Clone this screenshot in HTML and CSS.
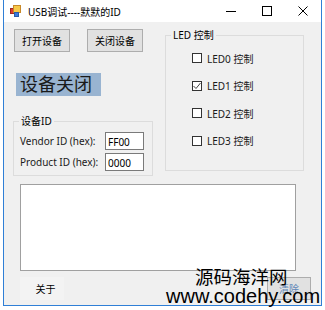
FILE: index.html
```html
<!DOCTYPE html>
<html>
<head>
<meta charset="utf-8">
<link rel="stylesheet" href="styles.css">
</head>
<body>
<div class="window">
  <div class="titlebar">
    <svg class="app-icon" width="11" height="12" viewBox="0 0 11 12">
      <rect x="0.5" y="3.5" width="4" height="5" fill="#e23a2f" stroke="#9c2a22"/>
      <rect x="3.5" y="0.5" width="7" height="7" fill="#f7c948" stroke="#c8892a"/>
      <rect x="4.5" y="7.5" width="4" height="4" fill="#3a7be0" stroke="#2a5ca8"/>
    </svg>
    <span class="title">USB调试----默默的ID</span>
    <div class="caption-btn">
      <svg width="10" height="10" viewBox="0 0 10 10"><line x1="0" y1="5.5" x2="10" y2="5.5" stroke="#000" stroke-width="1"/></svg>
    </div>
    <div class="caption-btn">
      <svg width="10" height="10" viewBox="0 0 10 10"><rect x="0.5" y="0.5" width="9" height="9" fill="none" stroke="#000" stroke-width="1"/></svg>
    </div>
    <div class="caption-btn">
      <svg width="10" height="10" viewBox="0 0 10 10"><path d="M0.5 0.5 L9.5 9.5 M9.5 0.5 L0.5 9.5" stroke="#000" stroke-width="1"/></svg>
    </div>
  </div>
  <div class="client">
    <div class="top-row">
      <div class="left-col">
        <div class="btn-row">
          <button class="btn">打开设备</button>
          <button class="btn">关闭设备</button>
        </div>
        <div class="status">设备关闭</div>
        <fieldset class="group dev-group">
          <legend>设备ID</legend>
          <div class="id-grid">
            <span class="lbl">Vendor ID (hex):</span><span class="tb">FF00</span>
            <span class="lbl">Product ID (hex):</span><span class="tb">0000</span>
          </div>
        </fieldset>
      </div>
      <fieldset class="group led-group">
        <legend>LED 控制</legend>
        <div class="led-list">
          <div class="chk"><span class="box"></span><span>LED0 控制</span></div>
          <div class="chk"><span class="box"><svg width="8" height="8" viewBox="0 0 8 8"><polyline points="0.5,4 3,6.5 7.5,1" fill="none" stroke="#444" stroke-width="1"/></svg></span><span>LED1 控制</span></div>
          <div class="chk"><span class="box"></span><span>LED2 控制</span></div>
          <div class="chk"><span class="box"></span><span>LED3 控制</span></div>
        </div>
      </fieldset>
    </div>
    <div class="log"></div>
    <div class="bottom-row">
      <button class="btn flat">关于</button>
      <button class="btn clear">清除</button>
    </div>
  </div>
</div>
<div class="watermark">
  <div class="wm-cn">源码海洋网</div>
  <div class="wm-en">www.codehy.com</div>
</div>
</body>
</html>
```
FILE: styles.css
```css
* { box-sizing: border-box; }
html, body { margin: 0; padding: 0; }
body {
  background: #ffffff;
  width: 325px;
  height: 310px;
  overflow: hidden;
  position: relative;
  font-family: "Noto Sans", "Noto Sans CJK SC", sans-serif;
  font-size: 10px;
  color: #000;
}
.window {
  margin-left: 3px;
  width: 319px;
  height: 306px;
  border: 1px solid #2f7fd6;
  border-top: none;
  background: #f0f0f0;
  display: flex;
  flex-direction: column;
}
.titlebar {
  height: 22px;
  background: #ffffff;
  display: flex;
  align-items: center;
  padding-left: 6px;
}
.app-icon { flex: none; }
.title {
  margin-left: 7px;
  flex: 1;
  font-size: 10px;
  color: #000;
  white-space: nowrap;
}
.caption-btn {
  width: 36px;
  height: 22px;
  display: flex;
  align-items: center;
  justify-content: center;
}
.client {
  flex: 1;
  padding: 7px 10px 0 9px;
}
.top-row {
  display: flex;
  gap: 12px;
  height: 147px;
}
.left-col {
  width: 140px;
  display: flex;
  flex-direction: column;
}
.btn-row {
  display: flex;
  gap: 17px;
  margin-left: 1px;
}
.btn {
  width: 56px;
  height: 23px;
  background: #e1e1e1;
  border: 1px solid #adadad;
  font-family: "Noto Sans", "Noto Sans CJK SC", sans-serif;
  font-size: 10px;
  color: #000;
  padding: 0;
  margin: 0;
}
.status {
  margin-top: 21px;
  margin-left: 3px;
  width: 85px;
  height: 23px;
  background: #99b4d1;
  font-size: 18px;
  line-height: 23px;
  padding-left: 4px;
  color: #1a1a1a;
  white-space: nowrap;
}
.group {
  margin: 0;
  border: 1px solid #dcdcdc;
  padding: 0;
  min-width: 0;
}
.group legend {
  margin-left: 5px;
  padding: 0 2px;
  font-size: 10px;
  line-height: 12px;
  color: #000;
}
.dev-group {
  margin-top: 19px;
  height: 61px;
  padding: 5px 0 0 0;
}
.id-grid {
  display: grid;
  grid-template-columns: 85px 39px;
  row-gap: 3px;
  align-items: center;
  padding-left: 6px;
}
.lbl { white-space: nowrap; color: #1a1a1a; }
.tb {
  height: 18px;
  background: #fff;
  border: 1px solid #7a7a7a;
  font-size: 10px;
  line-height: 16px;
  padding: 1px 0 0 2px;
}
.led-group {
  width: 139px;
  height: 142px;
  padding: 8px 0 0 0;
}
.led-list {
  display: flex;
  flex-direction: column;
  gap: 9.67px;
  padding-left: 26px;
}
.chk {
  display: flex;
  align-items: center;
  height: 18px;
  gap: 5px;
  white-space: nowrap;
  color: #1a1a1a;
}
.box {
  width: 10px;
  height: 10px;
  border: 1px solid #333;
  background: #fff;
  display: flex;
  align-items: center;
  justify-content: center;
}
.log {
  margin: 8px 0 0 7px;
  width: 276px;
  height: 87px;
  background: #fff;
  border: 1px solid #a0a0a0;
}
.bottom-row {
  display: flex;
  justify-content: space-between;
  margin: 6px 0 0 7px;
}
.btn.flat {
  width: 44px;
  padding-left: 7px;
  background: #f3f3f3;
  border-color: #f3f3f3;
}
.btn.clear {
  width: 44px;
  color: #5d86b8;
}
.watermark {
  position: absolute;
  left: 0;
  top: 0;
  pointer-events: none;
}
.wm-cn {
  position: absolute;
  left: 195px;
  top: 267px;
  font-family: "Noto Sans CJK SC", sans-serif;
  font-size: 18.5px;
  line-height: 18.5px;
  color: #000;
  white-space: nowrap;
}
.wm-en {
  position: absolute;
  left: 166px;
  top: 286px;
  font-family: "Liberation Sans", sans-serif;
  font-size: 20px;
  line-height: 20px;
  color: #000;
  white-space: nowrap;
}
```
